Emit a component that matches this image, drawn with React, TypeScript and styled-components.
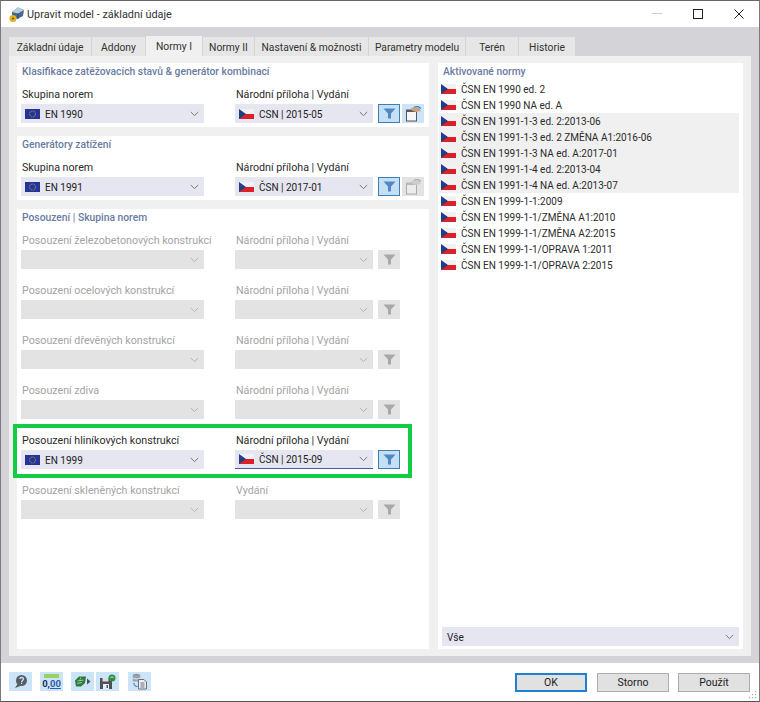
import React from "react";
import styled, { createGlobalStyle } from "styled-components";

const Global = createGlobalStyle`
  html, body { margin: 0; padding: 0; background: #fff; }
  #root { width: 760px; height: 702px; overflow: hidden; }
  * { box-sizing: border-box; }
`;
const Win = styled.div`
  width: 760px; height: 702px; display: flex; flex-direction: column;
  background: #fff; border: 1px solid #7a7a7a; border-bottom-color: #555; border-top-color: #666;
  font-family: Roboto, "Noto Sans", sans-serif; font-size: 10.5px; color: #222; white-space: nowrap;
`;
const TitleBar = styled.div`
  height: 26px; flex: none; display: flex; align-items: center; padding-left: 7px; gap: 2px; background: #fff;
`;
const TitleText = styled.span`font-size: 10.9px; color: #333; flex: 1; padding-top: 1px;`;
const WinBtns = styled.div`display: flex; align-items: center; color: #222;`;
const WinBtn = styled.div`width: 41px; height: 26px; display: flex; align-items: center; justify-content: center;`;
const Body = styled.div`
  flex: 1; background: #d4d4d8; padding: 9px 8px 7px 8px; display: flex; flex-direction: column; min-height: 0;
`;
const Tabs = styled.div`display: flex; height: 20px; flex: none; align-items: flex-end; gap: 1px;`;
const Tab = styled.div<{ $active?: boolean; $w: number }>`
  height: ${p => (p.$active ? 20 : 19)}px;
  display: flex; align-items: center; justify-content: center; padding-top: 1px;
  width: ${p => p.$w}px;
  background: ${p => (p.$active ? "#f0f0f0" : "#e6e6e6")};
  color: #333; font-size: 10.3px;
`;
const TabPanel = styled.div`
  flex: 1; background: #f0f0f0; padding: 7px 8px; display: flex; gap: 9px; min-height: 0;
`;
const LeftCol = styled.div`width: 412px; display: flex; flex-direction: column; gap: 9px;`;
const Group = styled.div<{ $grow?: boolean }>`
  background: #fff; padding: 2px 4px 4px 4px; ${p => (p.$grow ? "flex: 1;" : "height: 64px;")}
`;
const GroupTitle = styled.div`
  font-weight: 500; color: #6a7ba2; font-size: 10.3px; height: 13px; line-height: 13px; padding-left: 1px;
`;
const Row = styled.div<{ $first?: boolean; $pitch?: boolean; $highlight?: boolean }>`
  position: relative; display: flex; margin-top: ${p => (p.$first ? 9 : 0)}px;
  height: ${p => (p.$pitch ? 50 : 36)}px;
  ${p => p.$highlight ? `
    &::after {
      content: ""; box-sizing: border-box; position: absolute; left: -8px; right: 13px; top: -9px; height: 54px;
      border: 4px solid #12cc46; pointer-events: none;
    }
  ` : ""}
`;
const Field = styled.div<{ $w: number }>`width: ${p => p.$w}px; flex: none;`;
const Label = styled.div<{ $off?: boolean }>`
  height: 14px; line-height: 16px; margin-bottom: 3px; font-size: 10.7px; padding-left: 1px;
  color: ${p => (p.$off ? "#a3a3a3" : "#2b2b2b")};
`;
const Combo = styled.div<{ $off?: boolean; $focus?: boolean }>`
  height: 19px; display: flex; align-items: center; padding: 0 5px 0 4px; gap: 5px;
  background: ${p => (p.$off ? "#e3e3e3" : "#e6e6f0")};
  color: #222; font-size: 10px;
  ${p => (p.$focus ? "border-bottom: 1px solid #4a5aa8;" : "")}
`;
const ComboText = styled.span`flex: 1; padding-top: 1px;`;
const Gap = styled.div<{ $w: number }>`width: ${p => p.$w}px; flex: none;`;
const Tools = styled.div`
  display: flex; align-items: flex-start; gap: 2px; padding-left: 5px; padding-top: 17px;
`;
const ToolBtn = styled.div<{ $v: "on" | "off" | "soft" | "gray" }>`
  width: 22px; height: 19px; display: flex; align-items: center; justify-content: center;
  background: ${p => (p.$v === "on" ? "#c4dff6" : p.$v === "soft" ? "#cce4f7" : "#e3e3e3")};
  ${p => (p.$v === "on" ? "border: 1px solid #3f7fb0;" : "")}
`;
const RightCol = styled.div`flex: 1; background: #fff; display: flex; flex-direction: column; padding: 2px 4px 3px 1px;`;
const RightTitle = styled(GroupTitle)`padding-left: 4px;`;
const List = styled.div`flex: 1; margin-top: 3px;`;
const ListRow = styled.div<{ $shade?: boolean }>`
  height: 16px; display: flex; align-items: center; gap: 5px; padding-left: 2px;
  background: ${p => (p.$shade ? "#f0f0f0" : "transparent")}; color: #2b2b2b; font-size: 10px;
`;
const AllCombo = styled(Combo)`margin-left: 3px; padding-left: 5px;`;
const Footer = styled.div`height: 38px; flex: none; display: flex; align-items: flex-start; padding: 9px 0 0 8px; background: #fff; position: relative;`;
const IconBtn = styled.div<{ $ml?: number }>`
  width: 23px; height: 19px; margin-left: ${p => p.$ml ?? 0}px;
  background: #cce4f7; display: flex; align-items: center; justify-content: center;
`;
const Spacer = styled.div`flex: 1;`;
const DlgBtn = styled.div<{ $def?: boolean }>`
  width: 72px; height: 19px; margin-left: ${p => (p.$def ? 0 : 9)}px; display: flex; align-items: center; justify-content: center;
  background: #e1e1e1; color: #222; font-size: 10.5px;
  border: ${p => (p.$def ? "2px solid #1f7fd0" : "1px solid #adadad")};
  ${p => (p.$def ? "margin-right: 1px;" : "")}
`;
const Buttons = styled.div`display: flex; padding: 1px 9px 0 0;`;
const Grip = styled.svg`position: absolute; right: 1px; bottom: 1px;`;
const ZeroIcon = styled.div`
  width: 17px; height: 16px; display: flex; flex-direction: column; align-items: center;
  font-size: 9.5px; font-weight: 700; line-height: 11px; color: #1c2f5a;
  &::before { content: ""; width: 15px; height: 4px; background: #9ccf62; flex: none; }
`;
const Underlined = styled.span`color: #2c5ca8; text-decoration: underline;`;

const CzFlag = () => (
  <svg width="15" height="10" viewBox="0 0 15 10" style={{ flex: "none" }}>
    <rect width="15" height="5" fill="#f1f1f4" />
    <rect y="5" width="15" height="5" fill="#dc2027" />
    <path d="M0 0 L7 5 L0 10 Z" fill="#1f3f86" />
  </svg>
);
const EuFlag = () => (
  <svg width="15" height="10" viewBox="0 0 15 10" style={{ flex: "none" }}>
    <rect width="15" height="10" fill="#24349a" />
    <circle cx="7.5" cy="5" r="3" fill="none" stroke="#8c8a50" strokeWidth="1.1" strokeDasharray="1 .7" />
  </svg>
);
const Chevron = ({ off }: { off?: boolean }) => (
  <svg width="9" height="6" viewBox="0 0 9 6" style={{ flex: "none" }}>
    <path d="M.8 1 L4.5 4.6 L8.2 1" fill="none" stroke={off ? "#b4b4b4" : "#777"} strokeWidth="1" />
  </svg>
);
const Funnel = ({ off }: { off?: boolean }) => (
  <svg width="13" height="11" viewBox="0 0 13 11">
    <path d="M0.5 0.5 H12.5 L8 5.5 V10.5 H5 V5.5 Z" fill={off ? "#a8a8a8" : "#5088c4"} />
  </svg>
);
const Clip = ({ off }: { off?: boolean }) => (
  <svg width="17" height="16" viewBox="0 0 17 16">
    <rect x="1.5" y="5.5" width="10" height="9.5" fill={off ? "#ececec" : "#f6f6f6"} stroke={off ? "#aaa" : "#555"} />
    <rect x="1" y="3.5" width="11" height="2.5" fill={off ? "#b8b8b8" : "#5a5a5a"} />
    <path d="M5 3 L9 1 L14 2 L16 5 L11 6 L8 5 Z" fill={off ? "#cdcdcd" : "#c9a17c"} />
    <path d="M9 1 L13 0.5 L16 2.5" fill="none" stroke={off ? "#aaa" : "#3f7fc0"} strokeWidth="1.2" />
  </svg>
);

type Cfg = { label: string; side?: string; left?: string; right?: string; focus?: boolean; hl?: boolean };
const designs: Cfg[] = [
  { label: "Posouzení železobetonových konstrukcí" },
  { label: "Posouzení ocelových konstrukcí" },
  { label: "Posouzení dřevěných konstrukcí" },
  { label: "Posouzení zdiva" },
  { label: "Posouzení hliníkových konstrukcí", left: "EN 1999", right: "ČSN | 2015-09", focus: true, hl: true },
  { label: "Posouzení skleněných konstrukcí", side: "Vydání" },
];
const norms = [
  "ČSN EN 1990 ed. 2", "ČSN EN 1990 NA ed. A", "ČSN EN 1991-1-3 ed. 2:2013-06",
  "ČSN EN 1991-1-3 ed. 2 ZMĚNA A1:2016-06", "ČSN EN 1991-1-3 NA ed. A:2017-01",
  "ČSN EN 1991-1-4 ed. 2:2013-04", "ČSN EN 1991-1-4 NA ed. A:2013-07", "ČSN EN 1999-1-1:2009",
  "ČSN EN 1999-1-1/ZMĚNA A1:2010", "ČSN EN 1999-1-1/ZMĚNA A2:2015",
  "ČSN EN 1999-1-1/OPRAVA 1:2011", "ČSN EN 1999-1-1/OPRAVA 2:2015",
];
const tabs: [string, number][] = [
  ["Základní údaje", 82], ["Addony", 53], ["Normy I", 56], ["Normy II", 51], ["Nastavení & možnosti", 113],
  ["Parametry modelu", 96], ["Terén", 52], ["Historie", 56],
];

const ActiveRow = ({ label, left, right, clipOff }: { label: string; left: string; right: string; clipOff: boolean }) => (
  <Row $first>
    <Field $w={183}><Label>{label}</Label><Combo><EuFlag /><ComboText>{left}</ComboText><Chevron /></Combo></Field>
    <Gap $w={31} />
    <Field $w={138}><Label>Národní příloha | Vydání</Label><Combo><CzFlag /><ComboText>{right}</ComboText><Chevron /></Combo></Field>
    <Tools>
      <ToolBtn $v="on"><Funnel /></ToolBtn>
      <ToolBtn $v={clipOff ? "gray" : "soft"}><Clip off={clipOff} /></ToolBtn>
    </Tools>
  </Row>
);

export default function App() {
  return (
    <Win>
      <Global />
      <TitleBar>
        <svg width="17" height="17" viewBox="0 0 17 17">
          <path d="M4 6 L10 1.5 L16 4 L15 10 L9 13 L4 11 Z" fill="#46688f" />
          <path d="M10 1.5 L16 4 L10 7.5 L4 6 Z" fill="#b8cce0" />
          <path d="M10 7.5 V13" stroke="#2e4766" />
          <circle cx="5" cy="12.5" r="3.6" fill="#e2b21e" />
          <circle cx="5" cy="12.5" r="1.1" fill="#6f5a14" />
        </svg>
        <TitleText>Upravit model - základní údaje</TitleText>
        <WinBtns>
          <WinBtn><svg width="10" height="2"><rect width="10" height="1" fill="#ccc" /></svg></WinBtn>
          <WinBtn><svg width="10" height="10"><rect x=".5" y=".5" width="9" height="9" fill="none" stroke="#222" /></svg></WinBtn>
          <WinBtn><svg width="10" height="10"><path d="M.5 .5 L9.5 9.5 M9.5 .5 L.5 9.5" stroke="#222" /></svg></WinBtn>
        </WinBtns>
      </TitleBar>
      <Body>
        <Tabs>
          {tabs.map(([t, w]) => <Tab key={t} $w={w} $active={t === "Normy I"}>{t}</Tab>)}
        </Tabs>
        <TabPanel>
          <LeftCol>
            <Group>
              <GroupTitle>Klasifikace zatěžovacích stavů & generátor kombinací</GroupTitle>
              <ActiveRow label="Skupina norem" left="EN 1990" right="CSN | 2015-05" clipOff={false} />
            </Group>
            <Group>
              <GroupTitle>Generátory zatížení</GroupTitle>
              <ActiveRow label="Skupina norem" left="EN 1991" right="ČSN | 2017-01" clipOff />
            </Group>
            <Group $grow>
              <GroupTitle>Posouzení | Skupina norem</GroupTitle>
              {designs.map((d, i) => {
                const on = !!d.left;
                return (
                  <Row key={d.label} $first={i === 0} $pitch $highlight={d.hl}>
                    <Field $w={183}>
                      <Label $off={!on}>{d.label}</Label>
                      <Combo $off={!on}>{on && <EuFlag />}<ComboText>{d.left}</ComboText><Chevron off={!on} /></Combo>
                    </Field>
                    <Gap $w={31} />
                    <Field $w={138}>
                      <Label $off={!on}>{d.side ?? "Národní příloha | Vydání"}</Label>
                      <Combo $off={!on} $focus={d.focus}>{on && <CzFlag />}<ComboText>{d.right}</ComboText><Chevron off={!on} /></Combo>
                    </Field>
                    <Tools>
                      <ToolBtn $v={on ? "on" : "gray"}><Funnel off={!on} /></ToolBtn>
                    </Tools>
                  </Row>
                );
              })}
            </Group>
          </LeftCol>
          <RightCol>
            <RightTitle>Aktivované normy</RightTitle>
            <List>
              {norms.map((n, i) => (
                <ListRow key={n} $shade={i >= 2 && i <= 6}><CzFlag /><span>{n}</span></ListRow>
              ))}
            </List>
            <AllCombo><ComboText>Vše</ComboText><Chevron /></AllCombo>
          </RightCol>
        </TabPanel>
      </Body>
      <Footer>
        <IconBtn>
          <svg width="15" height="15" viewBox="0 0 15 15">
            <circle cx="8.5" cy="6.5" r="5.5" fill="#565f69" />
            <path d="M4.5 10 L2 14 L7.5 12 Z" fill="#565f69" />
            <path d="M6.8 5 C7 3 10.4 3 10.4 5 C10.4 6.4 8.6 6.4 8.6 8" fill="none" stroke="#cce4f7" strokeWidth="1.3" />
            <rect x="8" y="8.7" width="1.3" height="1.3" fill="#cce4f7" />
          </svg>
        </IconBtn>
        <IconBtn $ml={8}><ZeroIcon><span>0,<Underlined>00</Underlined></span></ZeroIcon></IconBtn>
        <IconBtn $ml={8}>
          <svg width="17" height="13" viewBox="0 0 17 13">
            <path d="M1 5.5 L5 1.5 L12 1.5 L11 8 L7 11.5 L2 11.5 Z" fill="#2d7a3a" />
            <path d="M3.5 6 L9.5 5 M3 8.5 L8 7.5 M7 2.5 L6 4.5" stroke="#9dd0a2" />
            <path d="M13 3.5 L16.5 6.5 L13 9.5 Z" fill="#4a4f55" />
          </svg>
        </IconBtn>
        <IconBtn $ml={2}>
          <svg width="17" height="16" viewBox="0 0 17 16">
            <path d="M1 4 H11 L13 6 V15 H1 Z" fill="#4a515a" />
            <rect x="3.5" y="4" width="6" height="3.5" fill="#d8dde2" />
            <rect x="4" y="10" width="6" height="5" fill="#eceef1" />
            <rect x="7.5" y="11" width="1.5" height="3" fill="#4a515a" />
            <circle cx="13" cy="4" r="3.5" fill="#2f8f46" />
            <path d="M11.5 4 L13 2.5 L14.5 4" fill="none" stroke="#c8ecd0" />
          </svg>
        </IconBtn>
        <IconBtn $ml={9}>
          <svg width="17" height="17" viewBox="0 0 17 17">
            <ellipse cx="5.5" cy="2.5" rx="3.7" ry="1.8" fill="#8b96a3" />
            <rect x="1.8" y="2.5" width="7.4" height="6" fill="#97a2ae" />
            <path d="M1.8 5 C3 6.3 8 6.3 9.2 5" fill="none" stroke="#e6ebef" />
            <path d="M7.5 6.5 H13 L15.5 9 V16 H7.5 Z" fill="#eceff2" stroke="#6a6f75" />
            <path d="M9.5 10 H13.5 M9.5 12 H13.5 M9.5 14 H13.5" stroke="#6a6f75" />
            <path d="M3 10 C3 13 4.5 13.5 6.5 13.5" fill="none" stroke="#3a6fb0" />
          </svg>
        </IconBtn>
        <Spacer />
        <Buttons>
          <DlgBtn $def>OK</DlgBtn>
          <DlgBtn>Storno</DlgBtn>
          <DlgBtn>Použít</DlgBtn>
        </Buttons>
        <Grip width="9" height="9" viewBox="0 0 9 9" fill="#aaa">
          <rect x="6" y="0" width="1.2" height="1.2" /><rect x="3" y="3" width="1.2" height="1.2" /><rect x="6" y="3" width="1.2" height="1.2" />
          <rect x="0" y="6" width="1.2" height="1.2" /><rect x="3" y="6" width="1.2" height="1.2" /><rect x="6" y="6" width="1.2" height="1.2" />
        </Grip>
      </Footer>
    </Win>
  );
}
